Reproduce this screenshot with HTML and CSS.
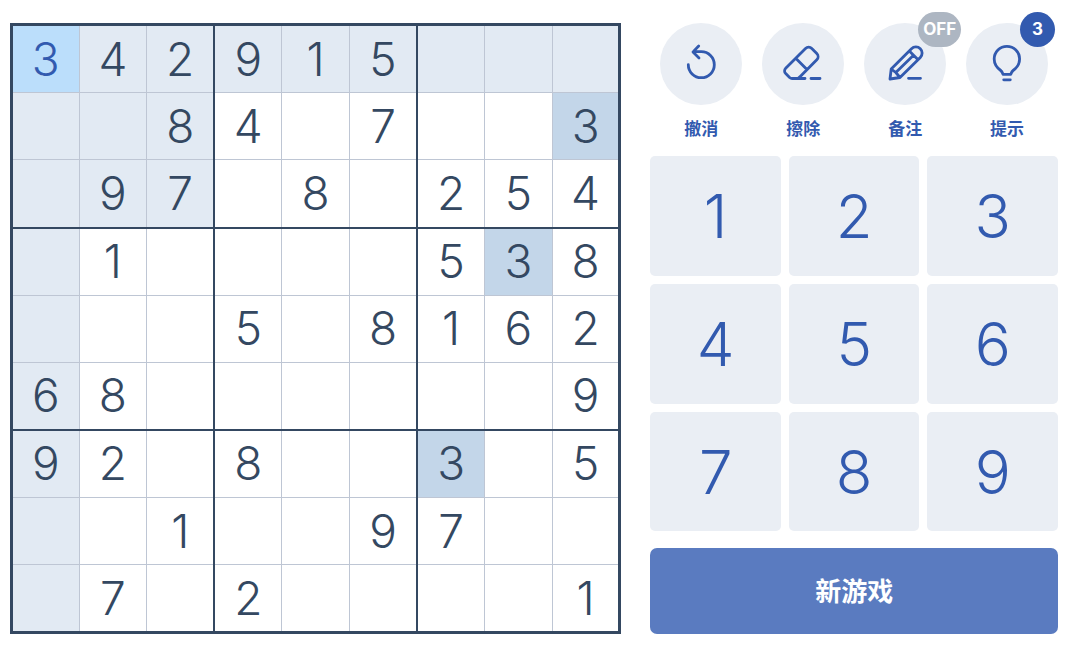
FILE: index.html
```
<!DOCTYPE html>
<html lang="zh-CN">
<head>
    <meta charset="UTF-8">
    <meta name="viewport" content="width=device-width, initial-scale=1.0">
    <title>数独</title>
    <link rel="stylesheet" href="styles.css">
</head>
<body>
    <main class="game">
        <div class="board">
            <table class="grid" id="grid">
                <tbody>
                    <tr><td class="selected">3</td><td class="lit">4</td><td class="lit">2</td><td class="lit">9</td><td class="lit">1</td><td class="lit">5</td><td class="lit"></td><td class="lit"></td><td class="lit"></td></tr>
                    <tr><td class="lit"></td><td class="lit"></td><td class="lit">8</td><td>4</td><td></td><td>7</td><td></td><td></td><td class="same">3</td></tr>
                    <tr><td class="lit"></td><td class="lit">9</td><td class="lit">7</td><td></td><td>8</td><td></td><td>2</td><td>5</td><td>4</td></tr>
                    <tr><td class="lit"></td><td>1</td><td></td><td></td><td></td><td></td><td>5</td><td class="same">3</td><td>8</td></tr>
                    <tr><td class="lit"></td><td></td><td></td><td>5</td><td></td><td>8</td><td>1</td><td>6</td><td>2</td></tr>
                    <tr><td class="lit">6</td><td>8</td><td></td><td></td><td></td><td></td><td></td><td></td><td>9</td></tr>
                    <tr><td class="lit">9</td><td>2</td><td></td><td>8</td><td></td><td></td><td class="same">3</td><td></td><td>5</td></tr>
                    <tr><td class="lit"></td><td></td><td>1</td><td></td><td></td><td>9</td><td>7</td><td></td><td></td></tr>
                    <tr><td class="lit"></td><td>7</td><td></td><td>2</td><td></td><td></td><td></td><td></td><td>1</td></tr>
                </tbody>
            </table>
        </div>

        <div class="panel">
            <div class="actions">
                <button type="button" class="action">
                    <span class="action-icon">
                        <svg viewBox="0 0 40 40" aria-hidden="true">
                            <path d="M7.3 20.7a13 13 0 1 0 13-13H12.500M17.700 2 12 7.900l6 6"/>
                        </svg>
                    </span>
                    <span class="action-label">撤消</span>
                </button>
                <button type="button" class="action">
                    <span class="action-icon">
                        <svg viewBox="0 0 40 40" aria-hidden="true">
                            <path d="M22 34.500H9c-1 0-1.700-.4-2.400-1L2.700 29.600a3.800 3.800 0 0 1 0-5.400L22.500 4.500a4.500 4.500 0 0 1 6.300 0l5 5a4.500 4.500 0 0 1 0 6.300L17.500 32.300q-2 2-3 2.200M13 14.500l10.700 10.700M28 34.500h9"/>
                        </svg>
                    </span>
                    <span class="action-label">擦除</span>
                </button>
                <button type="button" class="action">
                    <span class="action-icon">
                        <svg viewBox="0 0 40 40" aria-hidden="true">
                            <path d="M5 35 6.200 25 26.500 4.700a6.200 6.200 0 0 1 8.800 8.800L15 33.500zM6.200 25l4.600 3.500L15 33.500M10.800 28.500 28.500 11.300M24.300 7l8.800 8.800M23.500 34.300h12"/>
                        </svg>
                        <span class="badge badge-off">OFF</span>
                    </span>
                    <span class="action-label">备注</span>
                </button>
                <button type="button" class="action">
                    <span class="action-icon">
                        <svg viewBox="0 0 40 40" aria-hidden="true">
                            <path d="M16 30.300c-.6-1.500-.8-2.700-2.300-3.800C10 23.800 7.200 20.300 7.200 15a12.700 12.700 0 0 1 25.400 0c0 5.300-2.800 8.800-6.500 11.500-1.500 1.100-1.700 2.300-2.300 3.800zM16.700 35.800h6.600"/>
                        </svg>
                        <span class="badge">3</span>
                    </span>
                    <span class="action-label">提示</span>
                </button>
            </div>

            <div class="numpad" id="numpad">
                <button type="button" class="number">1</button>
                <button type="button" class="number">2</button>
                <button type="button" class="number">3</button>
                <button type="button" class="number">4</button>
                <button type="button" class="number">5</button>
                <button type="button" class="number">6</button>
                <button type="button" class="number">7</button>
                <button type="button" class="number">8</button>
                <button type="button" class="number">9</button>
            </div>

            <button type="button" class="new-game">新游戏</button>
        </div>
    </main>
</body>
</html>
```
FILE: styles.css
```
* {
    box-sizing: border-box;
}

body {
    font-family: 'Inter', 'Noto Sans CJK SC', sans-serif;
    margin: 0;
    background-color: #fff;
    color: #344861;
}

button {
    font-family: inherit;
    border: none;
    padding: 0;
    cursor: pointer;
}

.game {
    display: flex;
    gap: 29px;
    padding: 23px 22px 18px 10px;
}

/* Board */
.board {
    flex: 3;
    min-width: 0;
    aspect-ratio: 1;
    align-self: flex-start;
}

.grid {
    width: 100%;
    height: 100%;
    table-layout: fixed;
    border-collapse: collapse;
    border: 3px solid #344861;
}
.grid td {
    padding: 0 0 1px;
    border: 1px solid #bec6d4;
    font-size: 46px;
    font-weight: 300;
    line-height: 48px;
    text-align: center;
    vertical-align: middle;
    cursor: pointer;
}
.grid td:nth-child(3n) {
    border-right: 2px solid #344861;
}
.grid tr:nth-child(3n) td {
    border-bottom: 2px solid #344861;
}
.grid .lit {
    background-color: #e2eaf3;
}
.grid .same {
    background-color: #c3d6e9;
}
.grid .selected {
    background-color: #bbdefb;
    color: #325aaf;
}

/* Right side */
.panel {
    flex: 2;
    min-width: 0;
    display: flex;
    flex-direction: column;
}

.actions {
    display: grid;
    grid-template-columns: repeat(4, 1fr);
    margin-bottom: 15px;
}
.action {
    display: flex;
    flex-direction: column;
    align-items: center;
    gap: 12px;
    background: none;
    color: #325aaf;
}
.action-icon {
    position: relative;
    display: flex;
    align-items: center;
    justify-content: center;
    width: 82px;
    height: 82px;
    border-radius: 50%;
    background-color: #eaeef4;
}
.action-icon svg {
    width: 40px;
    height: 40px;
    fill: none;
    stroke: currentColor;
    stroke-width: 2.8;
    stroke-linecap: round;
    stroke-linejoin: round;
}
.action-label {
    font-size: 17px;
    font-weight: 700;
    line-height: 24px;
}

.badge {
    position: absolute;
    top: -11px;
    left: 54px;
    min-width: 35px;
    height: 35px;
    padding: 0 5px;
    border-radius: 18px;
    background-color: #325aaf;
    color: #fff;
    font-size: 17px;
    font-weight: 700;
    line-height: 35px;
    text-align: center;
}
.badge-off {
    background-color: #adb6c2;
}

.numpad {
    flex: 1;
    display: grid;
    grid-template-columns: repeat(3, 1fr);
    grid-auto-rows: 1fr;
    gap: 8px;
    margin-bottom: 17px;
}
.number {
    border-radius: 5px;
    background-color: #eaeef4;
    color: #325aaf;
    font-size: 60px;
    font-weight: 350;
    line-height: 72px;
}
.number:hover {
    background-color: #dce3ed;
}

.new-game {
    height: 86px;
    padding-bottom: 3px;
    border-radius: 7px;
    background-color: #5a7bc0;
    color: #fff;
    font-size: 26px;
    font-weight: 700;
}
.new-game:hover {
    background-color: #7091d5;
}
```
